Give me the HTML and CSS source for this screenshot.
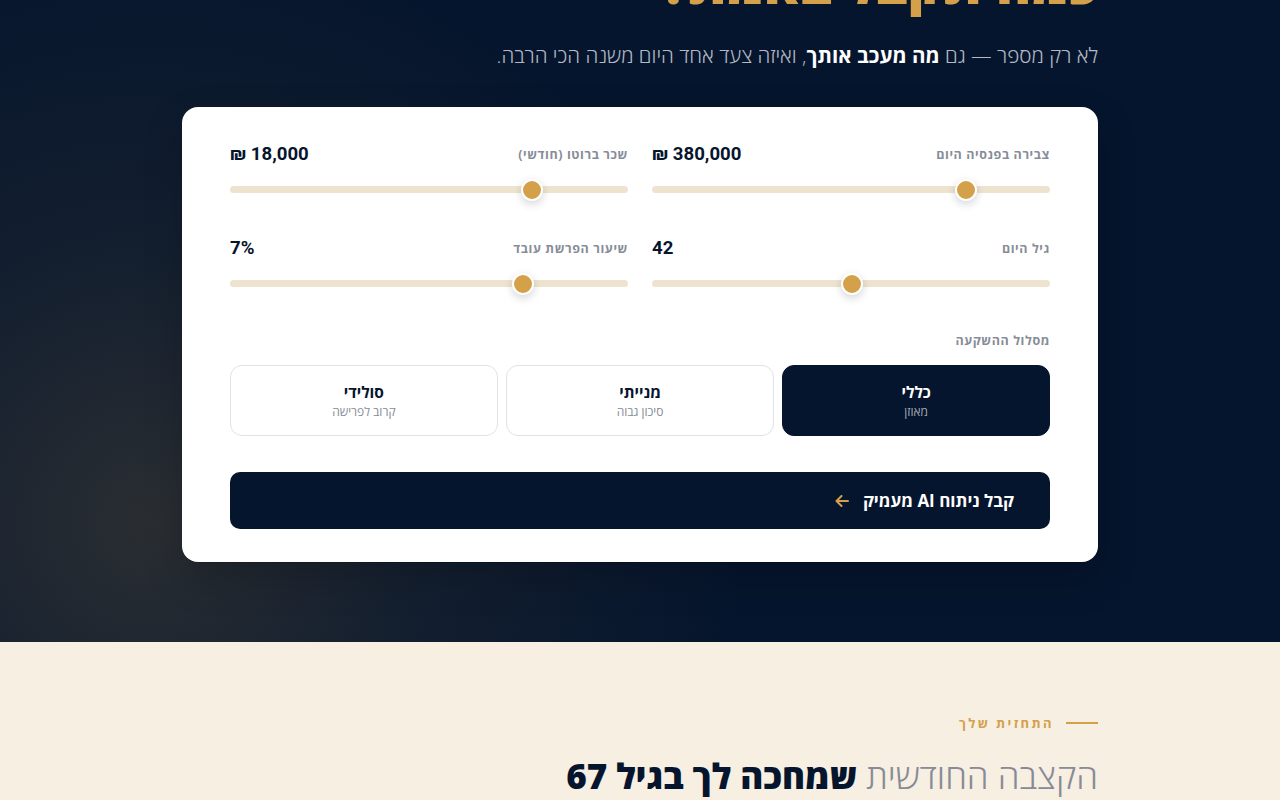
FILE: index.html
```html
<!DOCTYPE html>
<html lang="he" dir="rtl">
<head>
<meta charset="utf-8">
<title>מחשבון פנסיה</title>
<link rel="stylesheet" href="styles.css">
</head>
<body>
<section class="hero">
  <div class="container">
    <h1 class="hero-title">כמה תקבל באמת?</h1>
    <p class="hero-sub">לא רק מספר — גם <strong>מה מעכב אותך</strong>, ואיזה צעד אחד היום משנה הכי הרבה.</p>

    <div class="card">
      <div class="sliders">
        <div class="field">
          <div class="field-head">
            <span class="field-label">צבירה בפנסיה היום</span>
            <span class="field-value">380,000 ₪</span>
          </div>
          <div class="track"><span class="thumb" style="left: 79%"></span></div>
        </div>
        <div class="field">
          <div class="field-head">
            <span class="field-label">שכר ברוטו (חודשי)</span>
            <span class="field-value">18,000 ₪</span>
          </div>
          <div class="track"><span class="thumb" style="left: 76%"></span></div>
        </div>
        <div class="field">
          <div class="field-head">
            <span class="field-label">גיל היום</span>
            <span class="field-value">42</span>
          </div>
          <div class="track"><span class="thumb" style="left: 50.2%"></span></div>
        </div>
        <div class="field">
          <div class="field-head">
            <span class="field-label">שיעור הפרשת עובד</span>
            <span class="field-value">7%</span>
          </div>
          <div class="track"><span class="thumb" style="left: 73.6%"></span></div>
        </div>
      </div>

      <div class="route">
        <div class="route-label">מסלול ההשקעה</div>
        <div class="options">
          <button class="option selected"><span class="opt-title">כללי</span><span class="opt-sub">מאוזן</span></button>
          <button class="option"><span class="opt-title">מנייתי</span><span class="opt-sub">סיכון גבוה</span></button>
          <button class="option"><span class="opt-title">סולידי</span><span class="opt-sub">קרוב לפרישה</span></button>
        </div>
      </div>

      <button class="cta">
        <span>קבל ניתוח AI מעמיק</span>
        <svg class="cta-arrow" width="14" height="12" viewBox="0 0 14 12" aria-hidden="true"><path d="M13 6H1.5M6.5 1L1.5 6l5 5" fill="none" stroke="#d4a04a" stroke-width="2" stroke-linecap="round" stroke-linejoin="round"/></svg>
      </button>
    </div>
  </div>
</section>

<section class="forecast">
  <div class="container">
    <div class="eyebrow"><span class="eyebrow-line"></span><span>התחזית שלך</span></div>
    <h2 class="forecast-title"><span class="light">הקצבה החודשית</span> <strong>שמחכה לך בגיל 67</strong></h2>
  </div>
</section>
</body>
</html>
```

FILE: styles.css
```css
* { box-sizing: border-box; }

html, body {
  margin: 0;
  padding: 0;
}

body {
  font-family: Roboto, "Open Sans", "DejaVu Sans", sans-serif;
  color: #06152e;
  background: #f7efe2;
  overflow: hidden;
}

.container {
  max-width: 916px;
  margin: 0 auto;
}

.hero {
  background-color: #05152d;
  background-image: radial-gradient(circle 600px at 150px calc(100% - 120px), rgba(212, 160, 74, 0.18), rgba(212, 160, 74, 0.07) 45%, rgba(212, 160, 74, 0) 100%);
  margin-top: -47px;
  padding-bottom: 80px;
}

.hero-title {
  margin: 0;
  font-family: "Open Sans", sans-serif;
  font-size: 54px;
  font-weight: 800;
  line-height: 60px;
  color: #d4a04a;
  white-space: nowrap;
}

.hero-sub {
  margin: 26px 0 36px;
  font-family: "Open Sans", sans-serif;
  font-weight: 300;
  font-size: 20.6px;
  line-height: 32px;
  color: #b3b8c3;
}

.hero-sub strong {
  font-weight: 700;
  color: #ffffff;
}

.card {
  background: #ffffff;
  border-radius: 16px;
  padding: 35px 48px 33px;
  box-shadow: 0 1px 0 rgba(0, 0, 0, 0.15), 0 16px 40px rgba(0, 0, 0, 0.18);
}

.sliders {
  display: grid;
  grid-template-columns: 1fr 1fr;
  column-gap: 24px;
  row-gap: 43px;
}

.field-head {
  display: flex;
  justify-content: space-between;
  align-items: center;
  height: 24px;
  margin-bottom: 20px;
}

.field-label {
  font-family: "Open Sans", sans-serif;
  font-size: 12.5px;
  font-weight: 700;
  letter-spacing: 0.6px;
  color: #878c98;
}

.field-value {
  font-family: Roboto, "Open Sans", sans-serif;
  font-size: 18.6px;
  font-weight: 700;
  color: #06152e;
}

.track {
  position: relative;
  height: 7px;
  border-radius: 4px;
  background: #ede3cf;
}

.thumb {
  position: absolute;
  top: 50%;
  width: 22px;
  height: 22px;
  margin: -11px 0 0 -11px;
  border-radius: 50%;
  background: #d4a04a;
  border: 2.5px solid #ffffff;
  box-shadow: 0 3px 8px rgba(6, 21, 46, 0.18);
}

.route {
  margin-top: 46px;
}

.route-label {
  font-family: "Open Sans", sans-serif;
  font-size: 12.5px;
  font-weight: 700;
  letter-spacing: 0.6px;
  color: #878c98;
  line-height: 16px;
  margin-bottom: 16px;
}

.options {
  display: grid;
  grid-template-columns: repeat(3, 1fr);
  gap: 8.5px;
}

.option {
  display: flex;
  flex-direction: column;
  align-items: center;
  justify-content: center;
  height: 71px;
  border: 1px solid #e2e2e6;
  border-radius: 12px;
  background: #ffffff;
  font: inherit;
  cursor: pointer;
  padding: 0;
}

.opt-title {
  font-family: "Open Sans", sans-serif;
  font-size: 15.5px;
  font-weight: 700;
  line-height: 20px;
  color: #06152e;
}

.opt-sub {
  font-family: "Open Sans", sans-serif;
  font-size: 12px;
  line-height: 16px;
  margin-top: 2px;
  color: #868b97;
}

.option.selected {
  background: #05152d;
  border-color: #05152d;
}

.option.selected .opt-title { color: #ffffff; }
.option.selected .opt-sub { color: #a3a8b4; }

.cta {
  display: flex;
  align-items: center;
  gap: 14px;
  width: 100%;
  height: 57px;
  margin-top: 36px;
  padding: 0 36px;
  border: none;
  border-radius: 10px;
  background: #05152d;
  color: #ffffff;
  font-family: "Open Sans", sans-serif;
  font-size: 17px;
  font-weight: 700;
  cursor: pointer;
}

.cta-arrow { display: block; }

.forecast {
  padding-top: 72px;
  height: 200px;
}

.eyebrow {
  display: flex;
  align-items: center;
  gap: 12px;
  font-family: "Open Sans", sans-serif;
  font-size: 13px;
  font-weight: 700;
  letter-spacing: 2.4px;
  color: #d4a04a;
}

.eyebrow-line {
  width: 32px;
  height: 2px;
  background: #d4a04a;
}

.forecast-title {
  margin: 20px 0 0;
  font-family: "Open Sans", sans-serif;
  font-size: 35px;
  line-height: 48px;
  font-weight: 800;
  color: #06152e;
}

.forecast-title .light {
  font-weight: 300;
  color: #868b97;
}

.forecast-title strong { font-weight: 800; }
```
